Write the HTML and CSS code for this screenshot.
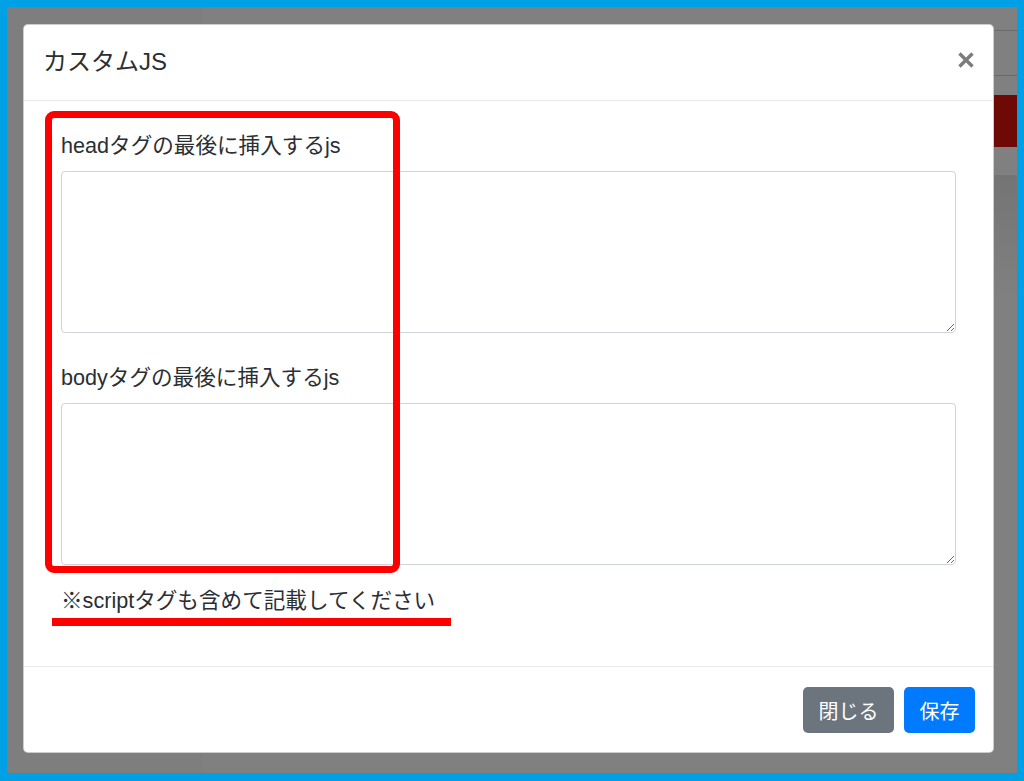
FILE: index.html
```html
<!DOCTYPE html>
<html lang="ja">

<head>
    <meta charset="UTF-8">
    <meta name="viewport" content="width=device-width, initial-scale=1.0">
    <title>カスタムJS</title>
    <link rel="stylesheet" href="styles.css">
</head>

<body>

    <div class="frame">
        <div class="backdrop">

            <!-- page behind the overlay -->
            <div class="behind-side"></div>
            <div class="behind-line behind-line1"></div>
            <div class="behind-line behind-line2"></div>
            <div class="behind-red"></div>
            <div class="behind-dark"></div>

            <div class="modal">
                <div class="modal-header">
                    <h5 class="modal-title">カスタムJS</h5>
                    <button type="button" class="close" aria-label="Close">
                        <svg width="16" height="16" viewBox="0 0 16 16">
                            <path d="M1.5 1.5L14.5 14.5M14.5 1.5L1.5 14.5" stroke="#7c7c7c" stroke-width="3.4" fill="none" />
                        </svg>
                    </button>
                </div>

                <div class="modal-body">
                    <form id="formulario">
                        <div class="form-group">
                            <label for="headjs">headタグの最後に挿入するjs</label>
                            <textarea id="headjs" class="form-control"></textarea>
                        </div>
                        <div class="form-group">
                            <label for="bodyjs">bodyタグの最後に挿入するjs</label>
                            <textarea id="bodyjs" class="form-control"></textarea>
                        </div>
                        <p class="note">※scriptタグも含めて記載してください</p>
                    </form>
                </div>

                <div class="modal-footer">
                    <button type="button" class="btn btn-secondary">閉じる</button>
                    <button type="button" class="btn btn-primary">保存</button>
                </div>

                <!-- red annotations -->
                <div class="mark-box"></div>
                <div class="mark-line"></div>
            </div>

        </div>
    </div>

</body>

</html>
```

FILE: styles.css
```css
body {
    margin: 0;
    padding: 0;
    font-family: "Liberation Sans", "Noto Sans CJK JP", sans-serif;
    color: #212529;
}

.frame {
    width: 1024px;
    height: 781px;
    box-sizing: border-box;
    border-style: solid;
    border-color: #00a0e6;
    border-width: 7px 7px 8px 7px;
}

.backdrop {
    position: relative;
    height: 100%;
    box-sizing: border-box;
    padding: 17px 0 0 16px;
    background-color: #808080;
    overflow: hidden;
}

.behind-side {
    position: absolute;
    left: 0;
    top: 0;
    width: 196px;
    height: 100%;
    background-color: #7e7e7e;
}

.behind-line {
    position: absolute;
    left: 960px;
    right: 0;
    height: 1px;
    background-color: #6a6a6a;
}

.behind-line1 {
    top: 23px;
}

.behind-line2 {
    top: 68px;
}

.behind-red {
    position: absolute;
    left: 960px;
    right: 0;
    top: 88px;
    height: 52px;
    background-color: #6d0a06;
}

.behind-dark {
    position: absolute;
    left: 960px;
    right: 0;
    top: 168px;
    height: 120px;
    background: linear-gradient(#747474, #808080);
}

.modal {
    position: relative;
    display: flex;
    flex-direction: column;
    width: 971px;
    height: 729px;
    box-sizing: border-box;
    background-color: #fff;
    border: 1px solid rgba(0, 0, 0, 0.2);
    border-radius: 5px;
}

.modal-header {
    display: flex;
    justify-content: space-between;
    align-items: flex-start;
    padding: 19px 19px 20px 19px;
    border-bottom: 1px solid #e6e9ed;
}

.modal-title {
    margin: 0;
    font-size: 24px;
    font-weight: normal;
    line-height: 36px;
    color: #2b2f33;
}

.close {
    margin-top: 8px;
    padding: 0;
    border: none;
    background: none;
    line-height: 0;
    cursor: pointer;
}

.modal-body {
    flex: 1;
    padding: 30px 37px 0 37px;
}

.form-group {
    margin-bottom: 30px;
}

label {
    display: block;
    font-size: 21.6px;
    line-height: 29px;
    margin-bottom: 11px;
    color: #2b2f33;
}

.form-control {
    display: block;
    width: 100%;
    height: 162px;
    box-sizing: border-box;
    border: 1px solid #ced4da;
    border-radius: 4px;
    padding: 7px 14px;
    font-size: 20px;
    resize: vertical;
}

.note {
    margin: -9px 0 0 0;
    font-size: 21.6px;
    line-height: 29px;
    color: #2b2f33;
}

.modal-footer {
    display: flex;
    justify-content: flex-end;
    gap: 10px;
    padding: 20px 18px 19px 18px;
    border-top: 1px solid #e6e9ed;
}

.btn {
    height: 46px;
    padding: 0 12px;
    border: 1px solid transparent;
    border-radius: 5px;
    font-family: "Liberation Sans", "Noto Sans CJK JP", sans-serif;
    font-size: 20px;
    color: #fff;
    cursor: pointer;
}

.btn-secondary {
    width: 91px;
    background-color: #6c757d;
}

.btn-primary {
    width: 71px;
    background-color: #007bff;
}

.mark-box {
    position: absolute;
    left: 21px;
    top: 86px;
    width: 355px;
    height: 462px;
    box-sizing: border-box;
    border: 7px solid #ff0000;
    border-radius: 9px;
}

.mark-line {
    position: absolute;
    left: 28px;
    top: 593px;
    width: 399px;
    height: 8px;
    background-color: #ff0000;
}
```
